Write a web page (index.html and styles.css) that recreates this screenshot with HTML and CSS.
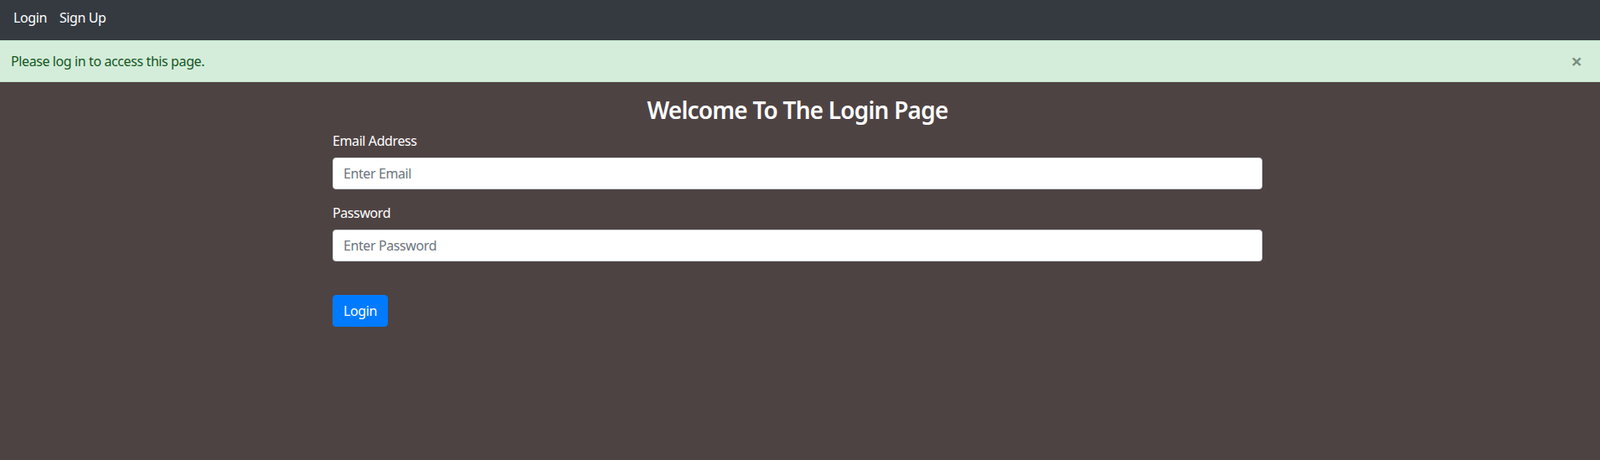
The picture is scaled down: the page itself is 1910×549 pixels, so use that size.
FILE: index.html
```html
<!DOCTYPE html>
<html lang="en">
<head>
<meta charset="utf-8">
<title>Login</title>
<link rel="stylesheet" href="styles.css">
</head>
<body>
<nav class="navbar">
  <a class="nav-link" href="#">Login</a>
  <a class="nav-link" href="#">Sign Up</a>
</nav>
<div class="alert">
  <span class="alert-text">Please log in to access this page.</span>
  <button class="close" type="button" aria-label="Close">&times;</button>
</div>
<main class="container">
  <h3 class="title">Welcome To The Login Page</h3>
  <form class="login-form">
    <div class="form-group">
      <label class="form-label" for="email">Email Address</label>
      <input class="form-control" id="email" type="email" placeholder="Enter Email">
    </div>
    <div class="form-group">
      <label class="form-label" for="password">Password</label>
      <input class="form-control" id="password" type="password" placeholder="Enter Password">
    </div>
    <div class="actions">
      <button class="btn" type="submit">Login</button>
    </div>
  </form>
</main>
</body>
</html>
```
FILE: styles.css
```css
* { box-sizing: border-box; }
html, body {
  margin: 0;
  padding: 0;
  height: 100%;
}
body {
  background: #4e4343;
  font-family: "Noto Sans", "Open Sans", sans-serif;
  font-size: 16px;
  line-height: 24px;
  letter-spacing: -0.4px;
  color: #ffffff;
}
.navbar {
  background: #343a40;
  height: 48px;
  display: flex;
  align-items: flex-start;
  padding: 9px 0 0 16px;
  gap: 15px;
}
.nav-link {
  color: #ffffff;
  text-decoration: none;
  font-size: 16px;
  line-height: 24px;
}
.alert {
  background: #d4edda;
  color: #155724;
  border-top: 1px solid #c3e6cb;
  border-bottom: 1px solid #c3e6cb;
  height: 50px;
  display: flex;
  align-items: center;
  justify-content: space-between;
  padding: 0 21px 0 13px;
}
.alert-text {
  font-size: 16px;
  line-height: 24px;
}
.close {
  background: none;
  border: 0;
  padding: 0;
  font-family: "Noto Sans", sans-serif;
  font-size: 24px;
  font-weight: 700;
  line-height: 1;
  opacity: 0.5;
  text-shadow: 0 1px 0 #fff;
  color: #1e3a27;
  cursor: pointer;
}
.container {
  width: 1110px;
  margin-left: calc(50% - 558px);
  padding-top: 16px;
}
.title {
  margin: 0 0 8px;
  text-align: center;
  font-size: 28px;
  font-weight: 600;
  line-height: 34px;
  letter-spacing: -0.8px;
}
.form-group {
  margin-bottom: 16px;
}
.form-label {
  display: block;
  margin-bottom: 8px;
  font-size: 16px;
  line-height: 24px;
}
.form-control {
  display: block;
  width: 100%;
  height: 38px;
  padding: 6px 12px;
  font-family: inherit;
  font-size: 16px;
  line-height: 24px;
  letter-spacing: -0.4px;
  color: #495057;
  background: #fff;
  border: 1px solid #ced4da;
  border-radius: 4px;
}
.form-control::placeholder {
  color: #6c757d;
}
.actions {
  padding-top: 24px;
}
.btn {
  height: 38px;
  padding: 6px 12px;
  font-family: inherit;
  font-size: 16px;
  line-height: 24px;
  letter-spacing: -0.4px;
  color: #fff;
  background: #007bff;
  border: 1px solid #007bff;
  border-radius: 4px;
  cursor: pointer;
}
```
